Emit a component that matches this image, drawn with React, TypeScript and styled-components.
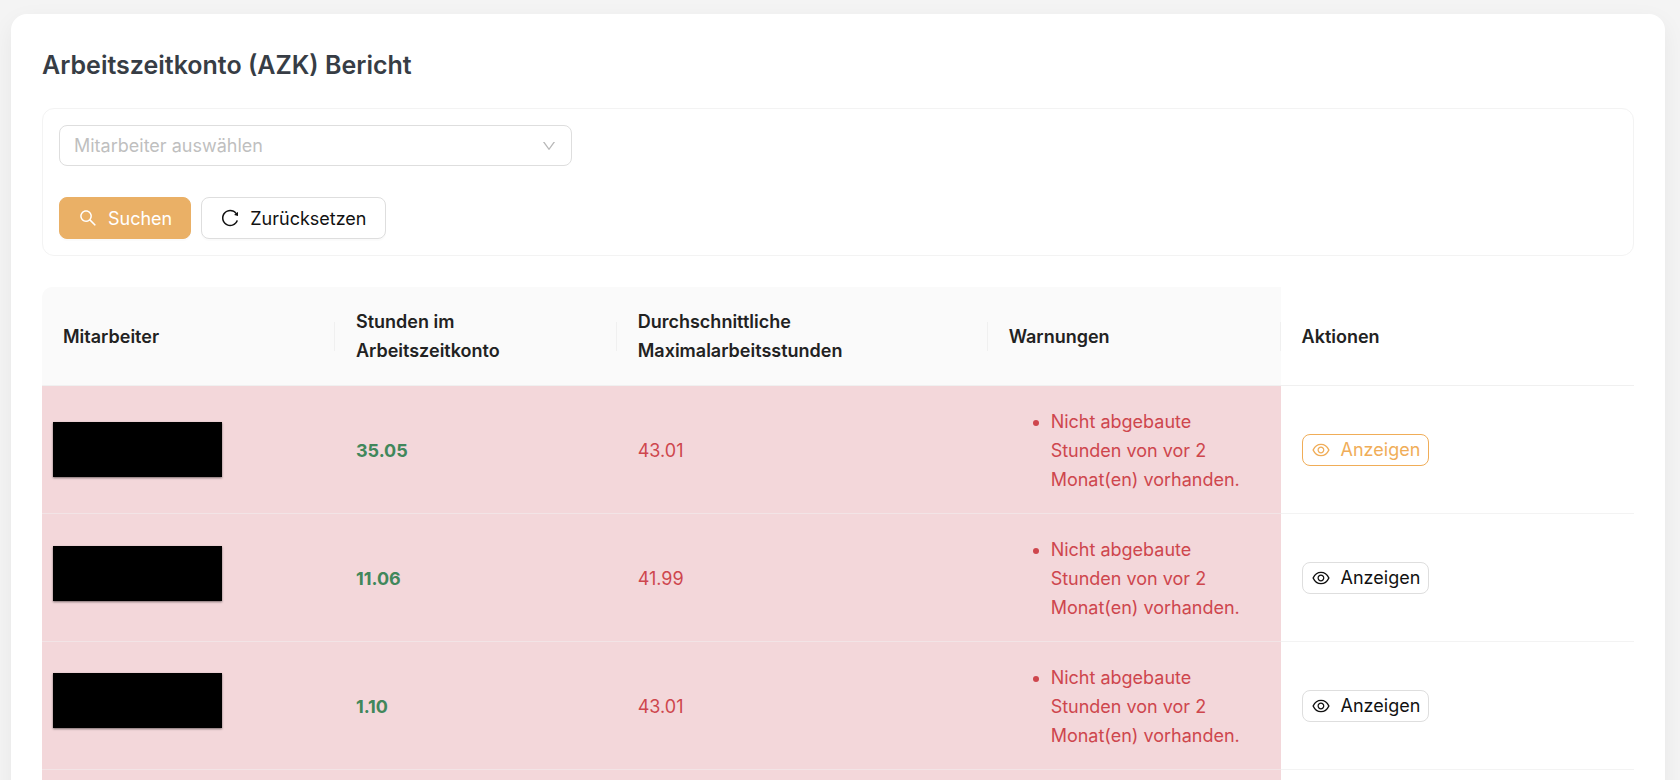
import React from 'react';
import styled, { createGlobalStyle, css } from 'styled-components';
import { AiOutlineDown, AiOutlineEye, AiOutlineReload, AiOutlineSearch } from 'react-icons/ai';

const GlobalStyle = createGlobalStyle`
  *, *::before, *::after { box-sizing: border-box; }
  body {
    margin: 0;
    background: #f4f4f4;
    color: #222222;
    font-family: Inter, "Liberation Sans", sans-serif;
    font-size: 18px;
    line-height: 29px;
  }
  button, select { font: inherit; }
`;

const Page = styled.div`
  height: 100vh;
  overflow: hidden;
  padding: 14px 15px 0 11px;
`;

const Card = styled.main`
  min-height: 100%;
  padding: 31px 31px 32px;
  background: #ffffff;
  border-radius: 16px;
  box-shadow: 0 8px 24px rgba(0, 0, 0, 0.06);
`;

const Title = styled.h1`
  margin: 0 0 23px;
  color: #373d45;
  font-size: 25px;
  font-weight: 600;
  line-height: 40px;
`;

const Filters = styled.form`
  display: flex;
  flex-direction: column;
  gap: 31px;
  padding: 16px;
  margin-bottom: 31px;
  border: 1px solid #f3f3f3;
  border-radius: 12px;
`;

const SelectBox = styled.div`
  position: relative;
  width: 33%;
  max-width: 513px;
`;

const EmployeeSelect = styled.select`
  display: block;
  width: 100%;
  height: 41px;
  padding: 0 14px;
  color: #bfbfbf;
  background: #ffffff;
  border: 1px solid #dedede;
  border-radius: 8px;
  appearance: none;
`;

const SelectArrow = styled(AiOutlineDown)`
  position: absolute;
  top: 13px;
  right: 15px;
  width: 16px;
  height: 16px;
  color: #b8b8b8;
  pointer-events: none;
`;

const Actions = styled.div`
  display: flex;
  gap: 10px;
`;

const Button = styled.button<{ $primary?: boolean }>`
  display: inline-flex;
  align-items: center;
  gap: 10px;
  height: 42px;
  padding: 0 18px;
  color: #111111;
  background: #ffffff;
  border: 1px solid #dedede;
  border-radius: 8px;
  box-shadow: 0 2px 1px rgba(0, 0, 0, 0.02);
  ${({ $primary }) =>
    $primary &&
    css`
      color: #ffffff;
      background: #eab066;
      border-color: #eab066;
    `}
`;

const ViewButton = styled.button<{ $active?: boolean }>`
  display: inline-flex;
  align-items: center;
  gap: 10px;
  height: 32px;
  padding: 0 8px;
  color: ${({ $active }) => ($active ? '#f0ad58' : '#111111')};
  background: #ffffff;
  border: 1px solid ${({ $active }) => ($active ? '#f0ad58' : '#dedede')};
  border-radius: 8px;
`;

const Table = styled.table`
  width: 100%;
  table-layout: fixed;
  border-collapse: separate;
  border-spacing: 0;
`;

const Column = styled.col<{ $share: number }>`
  width: ${({ $share }) => $share}%;
`;

const HeadCell = styled.th<{ $plain?: boolean }>`
  position: relative;
  height: 99px;
  padding: 20px 21px;
  text-align: left;
  font-weight: 600;
  background: ${({ $plain }) => ($plain ? '#ffffff' : '#fafafa')};
  border-bottom: 1px solid #f0f0f0;
  &:first-child { border-top-left-radius: 10px; }
  &:not(:last-child)::after {
    content: '';
    position: absolute;
    top: 35px;
    right: 0;
    width: 1px;
    height: 29px;
    background: #f0f0f0;
  }
`;

const Cell = styled.td<{ $plain?: boolean }>`
  position: relative;
  height: 128px;
  padding: 21px 21px 19px;
  background: ${({ $plain }) => ($plain ? '#ffffff' : '#f3d7da')};
  border-bottom: 1px solid ${({ $plain }) => ($plain ? '#f3f3f3' : '#f2e4e6')};
`;

const Redaction = styled.span<{ $top: number }>`
  position: absolute;
  top: ${({ $top }) => $top}px;
  left: 11px;
  width: 169px;
  height: 55px;
  background: #000000;
  box-shadow: 0 1px 2px rgba(0, 0, 0, 0.5);
`;

const Hours = styled.strong`
  color: #41875b;
  font-weight: 700;
`;

const Average = styled.span`
  color: #ce464d;
`;

const Warnings = styled.ul`
  margin: 0;
  padding-left: 42px;
  color: #ce464d;
`;

const rows = [
  { hours: '35.05', average: '43.01', top: 36, active: true },
  { hours: '11.06', average: '41.99', top: 32, active: false },
  { hours: '1.10', average: '43.01', top: 31, active: false },
];

export default function App() {
  return (
    <Page>
      <GlobalStyle />
      <Card>
        <Title>Arbeitszeitkonto (AZK) Bericht</Title>
        <Filters onSubmit={(event) => event.preventDefault()}>
          <SelectBox>
            <EmployeeSelect aria-label="Mitarbeiter" defaultValue="">
              <option value="">Mitarbeiter auswählen</option>
            </EmployeeSelect>
            <SelectArrow aria-hidden />
          </SelectBox>
          <Actions>
            <Button $primary type="submit">
              <AiOutlineSearch size={20} />
              Suchen
            </Button>
            <Button type="reset">
              <AiOutlineReload size={20} />
              Zurücksetzen
            </Button>
          </Actions>
        </Filters>
        <Table>
          <colgroup>
            <Column $share={18.4} />
            <Column $share={17.7} />
            <Column $share={23.3} />
            <Column $share={18.4} />
            <Column $share={22.2} />
          </colgroup>
          <thead>
            <tr>
              <HeadCell scope="col">Mitarbeiter</HeadCell>
              <HeadCell scope="col">
                Stunden im
                <br />
                Arbeitszeitkonto
              </HeadCell>
              <HeadCell scope="col">
                Durchschnittliche
                <br />
                Maximalarbeitsstunden
              </HeadCell>
              <HeadCell scope="col">Warnungen</HeadCell>
              <HeadCell scope="col" $plain>
                Aktionen
              </HeadCell>
            </tr>
          </thead>
          <tbody>
            {rows.map((row) => (
              <tr key={row.hours}>
                <Cell>
                  <Redaction $top={row.top} />
                </Cell>
                <Cell>
                  <Hours>{row.hours}</Hours>
                </Cell>
                <Cell>
                  <Average>{row.average}</Average>
                </Cell>
                <Cell>
                  <Warnings>
                    <li>Nicht abgebaute Stunden von vor 2 Monat(en) vorhanden.</li>
                  </Warnings>
                </Cell>
                <Cell $plain>
                  <ViewButton type="button" $active={row.active}>
                    <AiOutlineEye size={20} />
                    Anzeigen
                  </ViewButton>
                </Cell>
              </tr>
            ))}
            <tr>
              <Cell />
              <Cell />
              <Cell />
              <Cell />
              <Cell $plain />
            </tr>
          </tbody>
        </Table>
      </Card>
    </Page>
  );
}
